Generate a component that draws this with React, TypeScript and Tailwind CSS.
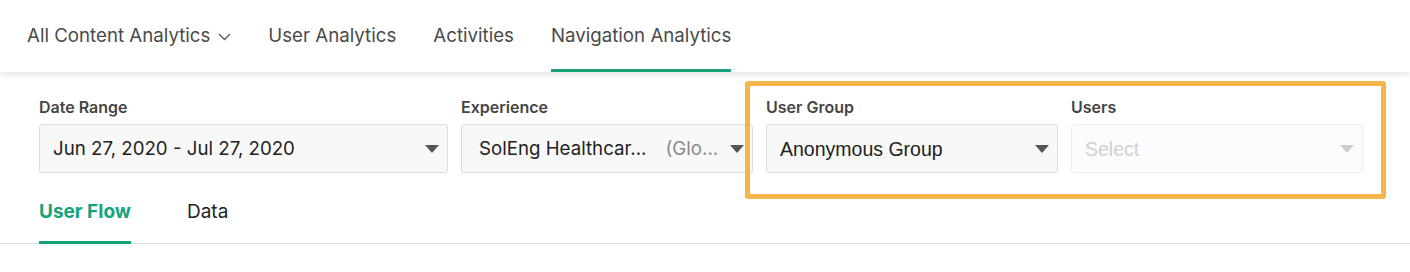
import React from 'react'

const sans = { fontFamily: 'Inter, "Noto Sans", sans-serif' }

function Caret({ disabled }: { disabled?: boolean }) {
  return (
    <svg width="14" height="8" viewBox="0 0 14 8" className="shrink-0">
      <path d="M0 0h14L7 8z" fill={disabled ? '#cfcfcf' : '#555555'} />
    </svg>
  )
}

function Chevron() {
  return (
    <svg width="13" height="8" viewBox="0 0 13 8" className="ml-[8px] mt-[1px]">
      <path d="M1 1l5.5 5.5L12 1" fill="none" stroke="#555" strokeWidth="1.3" />
    </svg>
  )
}

function Field({
  label,
  width,
  children,
  disabled,
}: {
  label: string
  width: string
  children: React.ReactNode
  disabled?: boolean
}) {
  return (
    <div className={`flex flex-col ${width}`}>
      <div className="h-[20px] text-[16px] leading-[20px] font-semibold text-[#454545] mb-[7px]">
        {label}
      </div>
      <div
        className={`h-[49px] flex items-center justify-between rounded-[3px] border pl-[13px] pr-[8px] ${
          disabled ? 'border-[#eeeeee] bg-[#fcfcfc]' : 'border-[#dcdcdc] bg-[#f8f8f8]'
        }`}
      >
        <div className="flex-1 min-w-0 flex items-center pt-[2px]">{children}</div>
        <Caret disabled={disabled} />
      </div>
    </div>
  )
}

export default function App() {
  const tabs = ['User Analytics', 'Activities', 'Navigation Analytics']
  return (
    <div className="relative w-[1410px] h-[272px] bg-white overflow-hidden" style={sans}>
      <nav className="relative z-10 h-[72px] flex items-stretch gap-[37px] px-[27px] bg-white shadow-[0_3px_6px_rgba(0,0,0,0.10)]">
        <div className="flex items-center pt-[4px] text-[18.7px] text-[#4a4a4a] border-b-[3px] border-transparent">
          All Content Analytics
          <Chevron />
        </div>
        {tabs.map((t) => (
          <div
            key={t}
            className={`flex items-center pt-[4px] text-[18.7px] text-[#4a4a4a] border-b-[3px] ${
              t === 'Navigation Analytics' ? 'border-[#16a37a]' : 'border-transparent'
            }`}
          >
            {t}
          </div>
        ))}
      </nav>

      <div className="flex gap-[13px] px-[39px] pt-[25px]">
        <Field label="Date Range" width="w-[409px]">
          <span className="text-[18.7px] text-[#222]">Jun 27, 2020 - Jul 27, 2020</span>
        </Field>
        <Field label="Experience" width="w-[292px]">
          <span className="text-[18.7px] text-[#222] pl-[4px]">SolEng Healthcar...</span>
          <span className="text-[18.7px] text-[#8a8a8a] ml-[19px]">(Glo...</span>
        </Field>
        <Field label="User Group" width="w-[292px]">
          <span
            className="text-[19.5px] text-[#222]"
            style={{ fontFamily: '"Liberation Sans", Arial, sans-serif' }}
          >
            Anonymous Group
          </span>
        </Field>
        <Field label="Users" width="w-[292px]" disabled>
          <span
            className="text-[19.5px] text-[#d0d0d0]"
            style={{ fontFamily: '"Liberation Sans", Arial, sans-serif' }}
          >
            Select
          </span>
        </Field>
      </div>

      <div className="mt-[26px] flex gap-[56px] px-[39px] border-b border-[#dddddd]">
        <div className="-mb-px pt-[1px] pb-[17px] border-b-[3px] border-[#16a37a] text-[19px] leading-[24px] font-bold text-[#16a37a]">
          User Flow
        </div>
        <div className="-mb-px pt-[1px] pb-[17px] border-b-[3px] border-transparent text-[19px] leading-[24px] text-[#222]">
          Data
        </div>
      </div>

      <div className="absolute left-[745px] top-[81px] w-[641px] h-[118px] border-[5px] border-[#f6b54c] rounded-[3px] pointer-events-none" />
    </div>
  )
}
